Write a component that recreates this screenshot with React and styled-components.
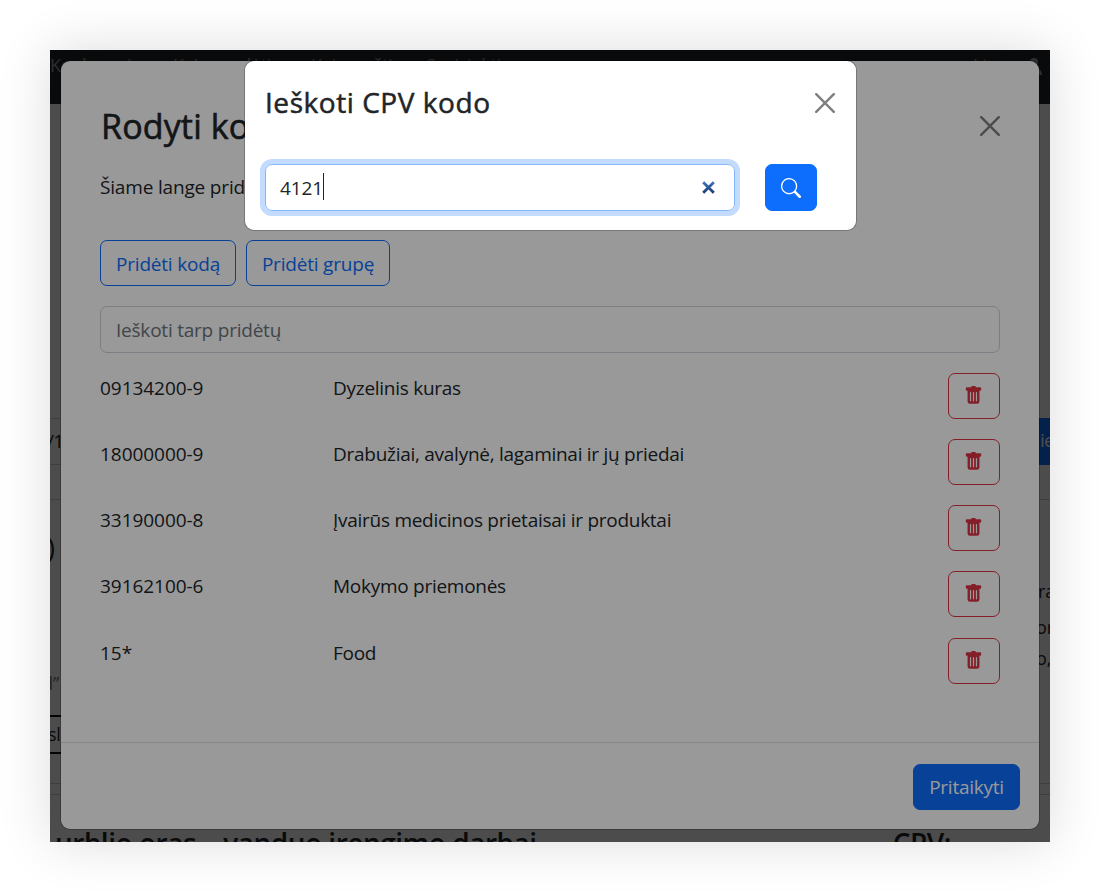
import React from "react";
import styled, { createGlobalStyle } from "styled-components";

const Global = createGlobalStyle`
  *, *::before, *::after { box-sizing: border-box; }
  body {
    margin: 0;
    background: #fff;
    color: #212529;
    font-family: "Open Sans", "Noto Sans", sans-serif;
    font-size: 19px;
    line-height: 30px;
  }
  h2, h3, p { margin: 0; font-weight: 400; }
  button, input { font: inherit; letter-spacing: inherit; }
`;

const Desk = styled.div`
  width: 1100px;
  height: 892px;
  padding: 50px;
  overflow: hidden;
`;

const Stage = styled.div`
  position: relative;
  height: 792px;
  overflow: hidden;
  background: #fff;
`;

const StageShadow = styled.div`
  box-shadow: 0 0 50px rgba(0, 0, 0, 0.14);
`;

/* ---- page below the dialogs ---- */

const Nav = styled.nav`
  display: flex;
  justify-content: space-between;
  height: 54px;
  padding: 0 3px 0 0;
  background: #212529;
  color: #98999b;
  white-space: nowrap;
`;

const NavItems = styled.div`
  display: flex;
  font-size: 18px;
  letter-spacing: -0.3px;
`;

const NavItem = styled.span`
  width: ${(p) => p.$w}px;
`;

const Spacer = styled.div`
  height: ${(p) => p.$h}px;
`;

const FilterBar = styled.div`
  display: flex;
  justify-content: space-between;
  height: 47px;
  border-top: 1px solid #ced4da;
  border-bottom: 1px solid #ced4da;
  line-height: 45px;
  letter-spacing: -0.8px;
`;

const FilterText = styled.span`
  margin-left: -3px;
`;

const FilterButton = styled.span`
  width: 17px;
  margin: -1px 0;
  padding-left: 7px;
  overflow: hidden;
  background: #0d6efd;
  color: #fff;
  white-space: nowrap;
`;

const Rule = styled.div`
  height: 1px;
  background: #cfd0d1;
`;

const Columns = styled.div`
  display: flex;
  justify-content: space-between;
  height: 283px;
`;

const LeftColumn = styled.div`
  width: 150px;
  padding-top: 28px;
`;

const Line = styled.p`
  height: ${(p) => p.$h}px;
  line-height: ${(p) => p.$h}px;
  margin-left: ${(p) => p.$shift || 0}px;
  font-size: ${(p) => p.$size || 18}px;
  color: ${(p) => p.$color || "#212529"};
`;

const OutlineBox = styled.div`
  height: 39px;
  border: 2px solid #111;
  border-width: 2px 0;
  line-height: 35px;
  font-size: 18px;
  text-indent: -2px;
  letter-spacing: -0.4px;
`;

const RightColumn = styled.div`
  width: 15px;
  padding-top: 75px;
  overflow: hidden;
  white-space: nowrap;
`;

const ResultTitle = styled.div`
  display: flex;
  justify-content: space-between;
  padding: 28px 99px 0 5px;
  font-size: 28px;
  font-weight: 600;
  line-height: 40px;
  letter-spacing: -0.48px;
  white-space: nowrap;
`;

/* ---- dialogs ---- */

const Layer = styled.div`
  position: absolute;
  inset: 0;
  display: flex;
  align-items: flex-start;
  padding: 11px 11px 0;
  background: rgba(0, 0, 0, ${(p) => p.$dim});
`;

const Dialog = styled.section`
  display: flex;
  flex-direction: column;
  width: ${(p) => p.$w}px;
  height: ${(p) => p.$h}px;
  margin-left: ${(p) => p.$offset || 0}px;
  border-radius: 9px;
  background: #fff;
  box-shadow: 0 0 0 1px rgba(0, 0, 0, 0.22);
`;

const DialogHeader = styled.header`
  display: flex;
  align-items: center;
  justify-content: space-between;
  padding: ${(p) => p.$pad};
`;

const BigTitle = styled.h2`
  padding-top: 1px;
  font-size: 34px;
  line-height: 43px;
  letter-spacing: 0.15px;
  -webkit-text-stroke: 0.6px currentColor;
  white-space: nowrap;
`;

const Title = styled.h3`
  padding-bottom: 2px;
  font-size: 28px;
  line-height: 34px;
  letter-spacing: 0.55px;
  -webkit-text-stroke: 0.5px currentColor;
  white-space: nowrap;
`;

const Body = styled.div`
  flex: 1;
  padding: 24px 39px 0;
`;

const Intro = styled.p`
  line-height: 30px;
  letter-spacing: -0.17px;
`;

const Actions = styled.div`
  display: flex;
  gap: 10px;
  margin: 38px 0 20px;
`;

const OutlineButton = styled.button`
  width: ${(p) => p.$w}px;
  height: 46px;
  padding: 2px 0 0;
  border: 1px solid ${(p) => p.$tone};
  border-radius: 7px;
  background: none;
  color: ${(p) => p.$tone};
  letter-spacing: ${(p) => p.$ls || 0}px;
  white-space: nowrap;
  display: flex;
  align-items: center;
  justify-content: center;
`;

const DeleteButton = styled(OutlineButton)`
  padding: 0 1px 1px 0;
`;

const SolidButton = styled(OutlineButton)`
  height: ${(p) => p.$h || 46}px;
  padding: 0;
  background: #0d6efd;
  border-color: #0d6efd;
  color: #fff;
`;

const Field = styled.input`
  display: block;
  width: 100%;
  height: 47px;
  padding: 1px 15px 0;
  border: 1px solid #ced4da;
  border-radius: 7px;
  background: none;
  outline: none;
  letter-spacing: -0.22px;
  &::placeholder { color: #6c757d; opacity: 1; }
`;

const List = styled.div`
  margin-top: 20px;
`;

const Row = styled.div`
  display: grid;
  grid-template-columns: 233px 1fr 52px;
  height: 66.15px;
`;

const Cell = styled.span`
  letter-spacing: ${(p) => p.$ls}px;
`;

const Footer = styled.footer`
  display: flex;
  justify-content: flex-end;
  height: 87px;
  padding: 21px 19px 0;
  border-top: 1px solid #dee2e6;
`;

const SearchRow = styled.div`
  display: flex;
  gap: 30px;
  padding: 0 39px 0 20px;
`;

const FocusField = styled.div`
  display: flex;
  align-items: center;
  width: 470px;
  height: 47px;
  padding: 0 19px 0 14px;
  border: 1px solid #86b7fe;
  border-radius: 7px;
  box-shadow: 0 0 0 5px rgba(13, 110, 253, 0.25);
`;

const Typed = styled.span`
  padding-top: 1px;
  letter-spacing: -0.15px;
`;

const Caret = styled.span`
  width: 1px;
  height: 27px;
  margin: 0 auto 2px 0;
  background: #222;
`;

const CloseIcon = () => (
  <svg width="21" height="20" viewBox="0 0 21 20" fill="none" stroke="#7f7f7f" strokeWidth="2.4" strokeLinecap="round">
    <path d="M1.2 1.2 18.8 18.8M18.8 1.2 1.2 18.8" />
  </svg>
);

const ClearIcon = () => (
  <svg width="13" height="13" viewBox="0 0 13 13" fill="none" stroke="url(#clearTone)" strokeWidth="2.8">
    <defs>
      <linearGradient id="clearTone" gradientUnits="userSpaceOnUse" x1="0" y1="0" x2="0" y2="13">
        <stop offset="0" stopColor="#3d78c8" />
        <stop offset="1" stopColor="#173468" />
      </linearGradient>
    </defs>
    <path d="M1.2 1.2 11.8 11.8M11.8 1.2 1.2 11.8" />
  </svg>
);

const SearchIcon = () => (
  <svg width="20" height="20" viewBox="0 0 16 16" fill="#fff">
    <path d="M11.742 10.344a6.5 6.5 0 1 0-1.397 1.398h-.001q.044.06.098.115l3.85 3.85a1 1 0 0 0 1.415-1.414l-3.85-3.85a1 1 0 0 0-.115-.1zM12 6.5a5.5 5.5 0 1 1-11 0 5.5 5.5 0 0 1 11 0" />
  </svg>
);

const TrashIcon = () => (
  <svg width="19" height="19" viewBox="0 0 16 16" fill="#dc3545">
    <path d="M2.5 1a1 1 0 0 0-1 1v1a1 1 0 0 0 1 1H3v9a2 2 0 0 0 2 2h6a2 2 0 0 0 2-2V4h.5a1 1 0 0 0 1-1V2a1 1 0 0 0-1-1H10a1 1 0 0 0-1-1H7a1 1 0 0 0-1 1zm3 4a.5.5 0 0 1 .5.5v7a.5.5 0 0 1-1 0v-7a.5.5 0 0 1 .5-.5M8 5a.5.5 0 0 1 .5.5v7a.5.5 0 0 1-1 0v-7A.5.5 0 0 1 8 5m3 .5v7a.5.5 0 0 1-1 0v-7a.5.5 0 0 1 1 0" />
  </svg>
);

const UserIcon = () => (
  <svg width="20" height="26" viewBox="0 0 20 26" fill="#98999b">
    <circle cx="7" cy="12" r="4" />
    <path d="M0 25c0-5 3-7.500 7-7.500s8 2.500 8 7.500z" />
  </svg>
);

const codes = [
  ["09134200-9", "Dyzelinis kuras"],
  ["18000000-9", "Drabužiai, avalynė, lagaminai ir jų priedai"],
  ["33190000-8", "Įvairūs medicinos prietaisai ir produktai"],
  ["39162100-6", "Mokymo priemonės"],
  ["15*", "Food"],
];

export default function App() {
  return (
    <Desk>
      <Global />
      <StageShadow>
        <Stage>
          <Nav>
            <NavItems>
              <NavItem $w={123}>Konkursai</NavItem>
              <NavItem $w={138}>Kaip pradėti</NavItem>
              <NavItem $w={115}>Kainoraštis</NavItem>
              <NavItem $w={90}>Susisiekti</NavItem>
            </NavItems>
            <NavItems>
              <NavItem $w={54}>Lt</NavItem>
              <UserIcon />
            </NavItems>
          </Nav>
          <Spacer $h={314} />
          <FilterBar>
            <FilterText>/1</FilterText>
            <FilterButton>ieškoti</FilterButton>
          </FilterBar>
          <Spacer $h={34} />
          <Rule />
          <Columns>
            <LeftColumn>
              <Line $h={40} $size={27} $shift={-3}>)</Line>
              <Spacer $h={100} />
              <Line $h={30} $color="#6c757d" $shift={-8}>d”</Line>
              <Spacer $h={17} />
              <OutlineBox>sl</OutlineBox>
            </LeftColumn>
            <RightColumn>
              <Line $h={33} $shift={3}>ras</Line>
              <Line $h={38} $shift={1}>oro</Line>
              <Line $h={24} $shift={1}>o, </Line>
            </RightColumn>
          </Columns>
          <Rule />
          <Spacer $h={10} />
          <Rule />
          <ResultTitle>
            <span>urblio oras – vanduo įrengimo darbai</span>
            <span>CPV:</span>
          </ResultTitle>

          <Layer $dim={0.5}>
            <Dialog $w={978} $h={768}>
              <DialogHeader $pad="43px 38px 0 40px">
                <BigTitle>Rodyti ko</BigTitle>
                <CloseIcon />
              </DialogHeader>
              <Body>
                <Intro>Šiame lange prid</Intro>
                <Actions>
                  <OutlineButton $w={136} $tone="#0d6efd" $ls={-0.2}>Pridėti kodą</OutlineButton>
                  <OutlineButton $w={144} $tone="#0d6efd" $ls={-0.2}>Pridėti grupę</OutlineButton>
                </Actions>
                <Field placeholder="Ieškoti tarp pridėtų" />
                <List>
                  {codes.map(([code, name]) => (
                    <Row key={code}>
                      <Cell $ls={-0.05}>{code}</Cell>
                      <Cell $ls={-0.27}>{name}</Cell>
                      <DeleteButton $w={52} $tone="#dc3545">
                        <TrashIcon />
                      </DeleteButton>
                    </Row>
                  ))}
                </List>
              </Body>
              <Footer>
                <SolidButton $w={107} $ls={-0.25}>Pritaikyti</SolidButton>
              </Footer>
            </Dialog>
          </Layer>

          <Layer $dim={0.4}>
            <Dialog $w={611} $h={169} $offset={184}>
              <DialogHeader $pad="24px 20px 43px 20px">
                <Title>Ieškoti CPV kodo</Title>
                <CloseIcon />
              </DialogHeader>
              <SearchRow>
                <FocusField>
                  <Typed>4121</Typed>
                  <Caret />
                  <ClearIcon />
                </FocusField>
                <SolidButton $w={52} $h={47}>
                  <SearchIcon />
                </SolidButton>
              </SearchRow>
            </Dialog>
          </Layer>
        </Stage>
      </StageShadow>
    </Desk>
  );
}
